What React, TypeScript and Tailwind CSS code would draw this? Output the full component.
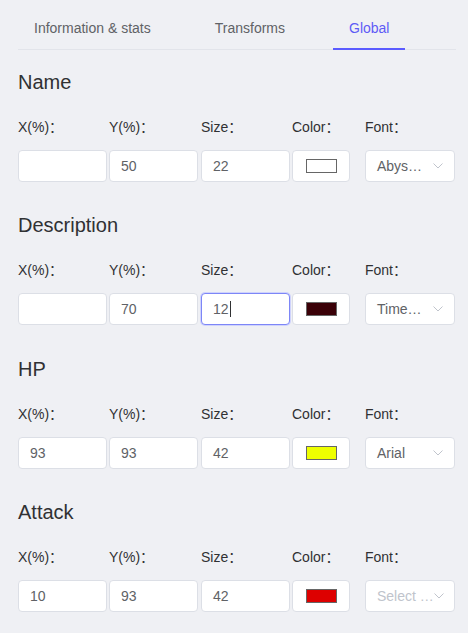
type Section = {
  title: string;
  x: string;
  y: string;
  size: string;
  color: string;
  font: string | null;
  focused?: boolean;
};

const sections: Section[] = [
  { title: "Name", x: "", y: "50", size: "22", color: "#ffffff", font: "Abys…" },
  { title: "Description", x: "", y: "70", size: "12", color: "#3a0007", font: "Time…", focused: true },
  { title: "HP", x: "93", y: "93", size: "42", color: "#eeff00", font: "Arial" },
  { title: "Attack", x: "10", y: "93", size: "42", color: "#dd0000", font: null },
];

const labels = ["X(%)：", "Y(%)：", "Size：", "Color：", "Font："];

// top margin of each section, nudged to match the reference spacing
const sectionGap = ["mt-[18px]", "mt-[29px]", "mt-[30px]", "mt-[29px]"];

const TextBox = ({ value, focused }: { value: string; focused?: boolean }) => (
  <div
    className={
      "flex h-8 w-[89px] items-center rounded-[4px] border bg-white px-[11px] text-sm text-[#606266] " +
      (focused ? "border-[#7d86f7] shadow-[0_0_0_1px_#cfd3fc]" : "border-[#dcdfe6]")
    }
  >
    {value}
    {focused && <span className="ml-px h-4 w-px bg-[#303133]" />}
  </div>
);

const Chevron = () => (
  <svg width="10" height="6" viewBox="0 0 10 6" fill="none" className="shrink-0">
    <polyline points="0.5,0.5 5,5 9.5,0.5" stroke="#c0c4cc" strokeWidth="1" />
  </svg>
);

const FieldRow = ({ s }: { s: Section }) => (
  <div className="grid grid-cols-[91px_92px_91px_73px_90px]">
    {labels.map((l) => (
      <div key={l} className="h-5 text-sm leading-5 text-[#303133]">
        {l}
      </div>
    ))}
    <div className="col-span-5 h-[13px]" />
    <TextBox value={s.x} />
    <TextBox value={s.y} />
    <TextBox value={s.size} focused={s.focused} />
    <div className="flex h-8 w-[58px] items-center justify-center rounded-[4px] border border-[#dcdfe6] bg-white">
      <div className="h-[14px] w-[31px] border border-[#666]" style={{ backgroundColor: s.color }} />
    </div>
    <div className="flex h-8 w-[90px] items-center justify-between rounded-[4px] border border-[#dcdfe6] bg-white pl-[11px] pr-[11px] text-sm">
      <span className={"whitespace-nowrap " + (s.font ? "text-[#606266]" : "text-[#c0c4cc]")}>
        {s.font ?? "Select …"}
      </span>
      <Chevron />
    </div>
  </div>
);

export default function App() {
  const tabs = ["Information & stats", "Transforms", "Global"];
  return (
    <div
      className="min-h-[633px] bg-[#eff0f4] pl-[18px] pr-[12px]"
      style={{ fontFamily: '"Liberation Sans", Arial, "Noto Sans CJK SC", sans-serif' }}
    >
      <div className="flex h-[50px] gap-8 border-b border-[#e2e4ea]">
        {tabs.map((t, i) => (
          <div
            key={t}
            className={
              "relative h-[49px] px-4 pt-2 text-sm leading-10 " +
              (i === 2 ? "text-[#5e5bf6]" : "text-[#606266]")
            }
          >
            {t}
            {i === 2 && <div className="absolute -bottom-px left-0 right-0 h-[2px] bg-[#5b5bff]" />}
          </div>
        ))}
      </div>
      <div className="flex flex-col">
        {sections.map((s, i) => (
          <div key={s.title} className={sectionGap[i]}>
            <h2 className="h-7 text-xl leading-7 text-[#303133]">{s.title}</h2>
            <div className="mt-[21px]">
              <FieldRow s={s} />
            </div>
          </div>
        ))}
      </div>
    </div>
  );
}
